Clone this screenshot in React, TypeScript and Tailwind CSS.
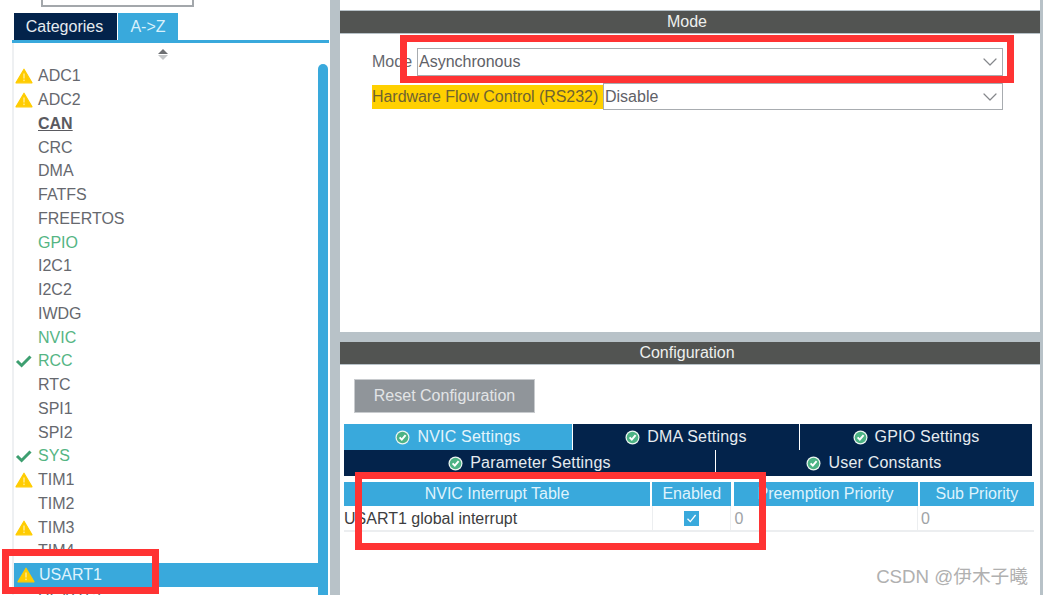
import { ChevronDown } from "lucide-react";

type Status = "warn" | "ok" | "none";

const peripherals: { name: string; status: Status; tone?: "green" | "bold" }[] = [
  { name: "ADC1", status: "warn" },
  { name: "ADC2", status: "warn" },
  { name: "CAN", status: "none", tone: "bold" },
  { name: "CRC", status: "none" },
  { name: "DMA", status: "none" },
  { name: "FATFS", status: "none" },
  { name: "FREERTOS", status: "none" },
  { name: "GPIO", status: "none", tone: "green" },
  { name: "I2C1", status: "none" },
  { name: "I2C2", status: "none" },
  { name: "IWDG", status: "none" },
  { name: "NVIC", status: "none", tone: "green" },
  { name: "RCC", status: "ok", tone: "green" },
  { name: "RTC", status: "none" },
  { name: "SPI1", status: "none" },
  { name: "SPI2", status: "none" },
  { name: "SYS", status: "ok", tone: "green" },
  { name: "TIM1", status: "warn" },
  { name: "TIM2", status: "none" },
  { name: "TIM3", status: "warn" },
  { name: "TIM4", status: "none" },
];

function WarnIcon() {
  return (
    <svg width="18" height="16" viewBox="0 0 18 16" className="shrink-0">
      <path d="M9 1.2 L17 14.8 H1 Z" fill="#ffcc00" stroke="#ffcc00" strokeWidth="1.2" strokeLinejoin="round" />
      <rect x="8.3" y="5.5" width="1.4" height="5" fill="#ffeb99" />
      <rect x="8.3" y="11.6" width="1.4" height="1.5" fill="#ffeb99" />
    </svg>
  );
}

function OkIcon() {
  return (
    <svg width="18" height="16" viewBox="0 0 18 16" className="shrink-0">
      <path d="M2 8 L6.6 12.5 L15.5 3.5" fill="none" stroke="#3d9f70" strokeWidth="3" />
    </svg>
  );
}

function RoundCheck() {
  return (
    <svg width="15" height="15" viewBox="0 0 15 15" className="shrink-0">
      <circle cx="7.5" cy="7.5" r="7" fill="#eef7f2" />
      <circle cx="7.5" cy="7.5" r="5.8" fill="#4db385" />
      <path d="M4.6 7.4 L6.8 9.6 L10.6 5.2" fill="none" stroke="#ffffff" strokeWidth="2" />
    </svg>
  );
}

function SideRow({ name, status, tone }: { name: string; status: Status; tone?: "green" | "bold" }) {
  return (
    <div className="flex h-[23.76px] items-center pl-px pt-px">
      <div className="w-[23px] shrink-0">
        {status === "warn" && <WarnIcon />}
        {status === "ok" && <OkIcon />}
      </div>
      <span
        className={
          tone === "green"
            ? "text-[#55b584]"
            : tone === "bold"
              ? "font-bold text-[#5a5a60] underline"
              : "text-[#66686e]"
        }
      >
        {name}
      </span>
    </div>
  );
}

function Sidebar() {
  return (
    <aside className="flex w-[330px] shrink-0 flex-col bg-white">
      <div className="h-[13px] pl-[41px]">
        <div className="h-[7px] w-[153px] border-x-2 border-b-2 border-[#a3a7ab]" />
      </div>
      <div className="flex h-[27px] gap-px pl-[14px]">
        <div className="flex w-[103px] items-center justify-center bg-[#03234b] pr-[2px] text-[#e6ebf0]">Categories</div>
        <div className="flex w-[60px] items-center justify-center bg-[#39a9dc] text-[#d8f0fb]">A-&gt;Z</div>
      </div>
      <div className="ml-[12px] h-[3px] w-[317px] bg-[#39a9dc]" />
      <div className="ml-[12px] flex-1 overflow-hidden border-l-2 border-[#eef0f2]">
        <div className="flex h-[21px] flex-col items-center justify-center gap-px pr-[18px] pt-[2px]">
          <div className="h-0 w-0 border-x-[5px] border-b-[5px] border-x-transparent border-b-[#6d6f72]" />
          <div className="h-0 w-0 border-x-[5px] border-t-[5px] border-x-transparent border-t-[#c4c6c8]" />
        </div>
        <div className="relative">
          <div className="absolute right-[2px] top-0 h-[560px] w-[10px] rounded-t-[5px] bg-[#39a9dc]" />
          {peripherals.map((p) => (
            <SideRow key={p.name} {...p} />
          ))}
          <div className="relative flex h-[23.76px] w-[313px] items-center bg-[#39a9dc] pl-[3px] pt-px text-[#dff3fc]">
            <div className="w-[22px] shrink-0">
              <WarnIcon />
            </div>
            USART1
          </div>
          <div className="flex h-[23.76px] items-center pl-[24px] text-[#66686e]">USART2</div>
        </div>
      </div>
    </aside>
  );
}

function Select({ value, className }: { value: string; className: string }) {
  return (
    <div className={`flex items-center justify-between border border-[#a8acb0] bg-white pl-px text-[#5f6167] ${className}`}>
      <span>{value}</span>
      <ChevronDown size={24} strokeWidth={1.2} className="text-[#85878b]" />
    </div>
  );
}

function PanelHeader({ title }: { title: string }) {
  return (
    <div className="flex h-[24px] items-center justify-center border-y border-[#b8c2c8] bg-[#525452] pr-[6px] text-[#eef0ee]">
      {title}
    </div>
  );
}

function SettingsTab({ label, active, className }: { label: string; active?: boolean; className: string }) {
  return (
    <div
      className={`flex items-center justify-center gap-[7px] tracking-[0.2px] ${
        active ? "bg-[#39a9dc] text-[#e4f4fb]" : "bg-[#03234b] text-[#e6ebf0]"
      } ${className}`}
    >
      <RoundCheck />
      {label}
    </div>
  );
}

function MainPanels() {
  return (
    <main className="flex min-w-0 flex-1 flex-col pr-[3px]">
      <section className="h-[332px] bg-white pt-[10px]">
        <PanelHeader title="Mode" />
        <div className="flex items-center pl-[32px] pt-[14px]">
          <span className="w-[45px] text-[#66686e]">Mode</span>
          <Select value="Asynchronous" className="h-[28px] w-[586px]" />
        </div>
        <div className="flex items-center pl-[32px] pt-[7px]">
          <span className="flex h-[24px] w-[231px] items-center whitespace-nowrap bg-[#ffd000] tracking-[-0.05px] text-[#6f6330]">
            Hardware Flow Control (RS232)
          </span>
          <Select value="Disable" className="h-[27px] w-[400px]" />
        </div>
      </section>
      <section className="min-h-0 flex-1 pt-[9px]">
        <div className="h-full bg-white">
          <PanelHeader title="Configuration" />
          <div className="pl-[14px] pt-[14px]">
            <div className="flex h-[34px] w-[181px] items-center justify-center border border-[#c8cbce] bg-[#90959a] text-[#e2e4e6]">
              Reset Configuration
            </div>
          </div>
          <div className="ml-[4px] mt-[11px] w-[688px]">
            <div className="flex h-[26px] gap-px">
              <SettingsTab label="NVIC Settings" active className="w-[228px]" />
              <SettingsTab label="DMA Settings" className="w-[226px]" />
              <SettingsTab label="GPIO Settings" className="w-[232px]" />
            </div>
            <div className="flex h-[26px] gap-px">
              <SettingsTab label="Parameter Settings" className="w-[371px]" />
              <SettingsTab label="User Constants" className="w-[316px]" />
            </div>
          </div>
          <div className="ml-[4px] mt-[6px] w-[690px]">
            <div className="grid h-[24px] grid-cols-[306px_79px_184px_114px] gap-[2.3px] text-center text-[#dff3fc]">
              <div className="bg-[#39a9dc] leading-[24px]">NVIC Interrupt Table</div>
              <div className="bg-[#39a9dc] leading-[24px]">Enabled</div>
              <div className="bg-[#39a9dc] leading-[24px]">Preemption Priority</div>
              <div className="bg-[#39a9dc] leading-[24px]">Sub Priority</div>
            </div>
            <div className="grid h-[26px] grid-cols-[306px_79px_184px_114px] gap-[2.3px] border-b-2 border-[#eceef0]">
              <div className="leading-[25px] whitespace-nowrap text-[#3d3d40]">USART1 global interrupt</div>
              <div className="flex items-center justify-center border-x border-[#eceef0]">
                <div className="flex h-[15px] w-[15px] items-center justify-center bg-[#39a9dc]">
                  <svg width="11" height="11" viewBox="0 0 11 11">
                    <path d="M1.5 5.8 L4.3 8.6 L9.6 2" fill="none" stroke="#fff" strokeWidth="1.3" />
                  </svg>
                </div>
              </div>
              <div className="border-r border-[#eceef0] pl-px leading-[25px] text-[#a0a3a6]">0</div>
              <div className="pl-px leading-[25px] text-[#a0a3a6]">0</div>
            </div>
          </div>
        </div>
      </section>
    </main>
  );
}

export default function App() {
  return (
    <div className="relative flex h-[595px] w-[1043px] overflow-hidden bg-[#b8c2c8] font-['Liberation_Sans',Arial,sans-serif] text-[16px]">
      <Sidebar />
      <div className="w-[10px] shrink-0" />
      <MainPanels />
      {/* annotations drawn on top of the screenshot */}
      <div className="absolute left-[400px] top-[35px] h-[48px] w-[614px] border-[7px] border-[#ff3333]" />
      <div className="absolute left-[355px] top-[472px] h-[78px] w-[411px] border-[7px] border-[#ff3333]" />
      <div className="absolute left-[2px] top-[549px] h-[45px] w-[157px] border-[7px] border-[#ff3333]" />
      <div className="absolute bottom-[4px] right-[15px] font-['Liberation_Sans','Noto_Sans_CJK_SC',sans-serif] text-[18.7px] text-[#b0b0b0]">
        CSDN @伊木子曦
      </div>
    </div>
  );
}
